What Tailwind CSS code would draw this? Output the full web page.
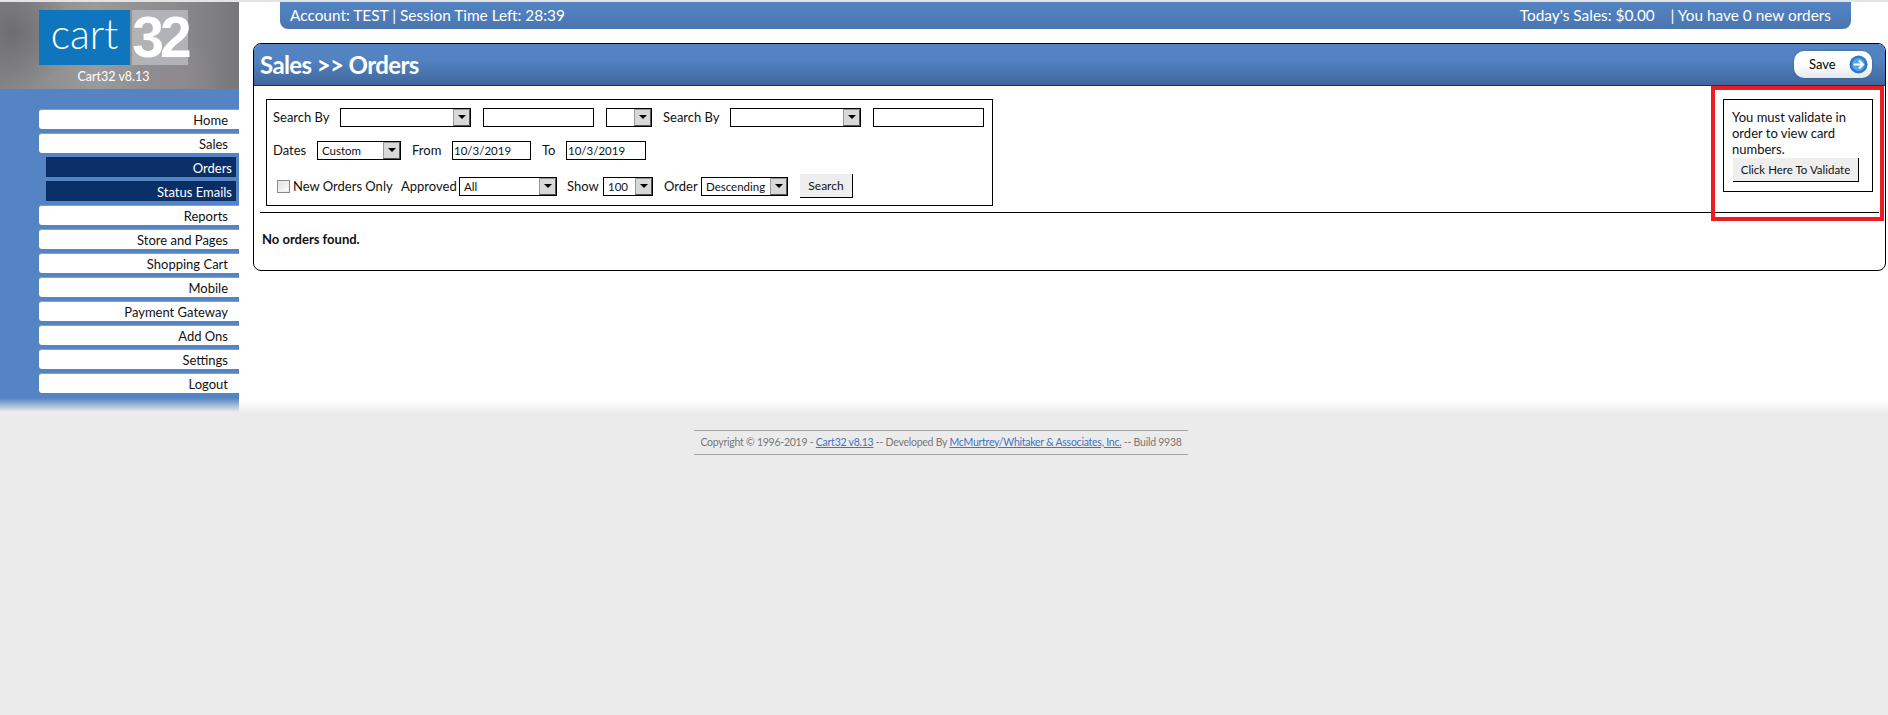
<!DOCTYPE html>
<html><head><meta charset="utf-8"><script src="https://cdn.jsdelivr.net/npm/@tailwindcss/browser@4"></script></head>
<body class="bg-[#ebebeb] font-['Lato','Liberation_Sans',sans-serif] text-[13px] text-[#111]">
<div class="relative h-[715px] w-[1888px] overflow-hidden">
  <div class="h-[400px] bg-white border-t-2 border-[#e4e4e4]">
    <div class="flex h-[398px] items-stretch">
      <aside class="w-[239px] shrink-0 bg-[#5484c4]">
        <div class="relative h-[87px] bg-[radial-gradient(circle_at_12px_30px,#6e6e70_0,transparent_60px),radial-gradient(circle_at_170px_80px,#8f8a90_0,transparent_50px),linear-gradient(90deg,#858587,#9a9a9c_40%,#8a8a8c_75%,#77777a)] pt-2">
          <div class="ml-[39px] flex h-[55px] w-[150px]">
            <div class="flex h-full w-[91px] items-center justify-center bg-[#0f76bd] pb-2 font-['Lato'] text-[41px] font-light leading-none text-white">cart</div>
            <div class="ml-[2px] flex h-full w-[56px] items-center justify-center bg-[#b2b3b6] font-['Liberation_Sans'] text-[57px] font-bold leading-none tracking-[-4px] text-white">32</div>
          </div>
          <div class="mt-[4px] ml-[22px] w-[183px] text-center text-[12.5px] leading-[16px] text-white">Cart32 v8.13</div>
        </div>
        <nav class="flex flex-col gap-[4px] pt-[20px] pl-[39px] text-[13px] leading-[20px]">
          <a class="block h-[20px] rounded-l-[3px] border-t border-[#9c9c9c] bg-white pr-[11px] text-right">Home</a>
          <a class="block h-[20px] rounded-l-[3px] border-t border-[#9c9c9c] bg-white pr-[11px] text-right">Sales</a>
          <a class="ml-[7px] mr-[3px] block h-[20px] bg-[#0a2f66] pr-[4px] pt-[1px] text-right text-white">Orders</a>
          <a class="ml-[7px] mr-[3px] block h-[20px] bg-[#0a2f66] pr-[4px] pt-[1px] text-right text-white">Status Emails</a>
          <a class="block h-[20px] rounded-l-[3px] border-t border-[#9c9c9c] bg-white pr-[11px] text-right">Reports</a>
          <a class="block h-[20px] rounded-l-[3px] border-t border-[#9c9c9c] bg-white pr-[11px] text-right">Store and Pages</a>
          <a class="block h-[20px] rounded-l-[3px] border-t border-[#9c9c9c] bg-white pr-[11px] text-right">Shopping Cart</a>
          <a class="block h-[20px] rounded-l-[3px] border-t border-[#9c9c9c] bg-white pr-[11px] text-right">Mobile</a>
          <a class="block h-[20px] rounded-l-[3px] border-t border-[#9c9c9c] bg-white pr-[11px] text-right">Payment Gateway</a>
          <a class="block h-[20px] rounded-l-[3px] border-t border-[#9c9c9c] bg-white pr-[11px] text-right">Add Ons</a>
          <a class="block h-[20px] rounded-l-[3px] border-t border-[#9c9c9c] bg-white pr-[11px] text-right">Settings</a>
          <a class="block h-[20px] rounded-l-[3px] border-t border-[#9c9c9c] bg-white pr-[11px] text-right">Logout</a>
        </nav>
      </aside>
      <main class="min-w-0 flex-1 pl-[14px] pr-[2px]">
        <div class="ml-[27px] mr-[35px] flex h-[27px] items-center justify-between rounded-b-[8px] bg-[linear-gradient(180deg,#5484c4,#4a76b0)] pl-[10px] pr-[20px] text-[15.4px] text-white">
          <span>Account: TEST | Session Time Left: 28:39</span>
          <span>Today's Sales: $0.00 &nbsp;&nbsp; | You have 0 new orders</span>
        </div>
        <section class="relative mt-[14px] h-[228px] rounded-[8px] border border-black">
          <header class="flex h-[42px] items-center justify-between rounded-t-[7px] border-b border-[#20304a] bg-[linear-gradient(180deg,#5484c4_0,#5282c0_40%,#40679c_100%)] pl-[6px] pr-[13px]">
            <h1 class="text-[24px] font-bold leading-none tracking-[-0.6px] text-white">Sales &gt;&gt; Orders</h1>
            <button class="flex h-[27px] w-[78px] items-center justify-between rounded-[10px] bg-[linear-gradient(180deg,#fff_50%,#e4e7ec)] pl-[15px] pr-[4px] text-[13px] text-black shadow-[0_0_2px_#33557f]">
              Save
              <svg width="19" height="19" viewBox="0 0 19 19"><circle cx="9.5" cy="9.5" r="9" fill="#2a78c8"/><circle cx="9.5" cy="9.5" r="6.5" fill="#5aa4e6"/><path d="M4.5 9.5h9M10 5.5l4 4-4 4" fill="none" stroke="#fff" stroke-width="2"/></svg>
            </button>
          </header>
          <div class="flex items-start justify-between pl-[12px] pr-[12px] pt-[13px]">
            <form class="h-[107px] w-[727px] border border-black text-[13px] leading-[19px]">
              <div class="mt-[7px] flex h-[20px] items-center pl-[6px]">
                <span class="w-[67px]">Search By</span>
                <span class="flex h-[19px] w-[131px] justify-end border border-black"><span class="flex h-[17px] w-[17px] items-center justify-center border border-[#999] border-r-[#555] border-b-[#555] bg-[#d8d8d8]"><span class="h-0 w-0 border-x-[4px] border-t-[4px] border-x-transparent border-t-black"></span></span></span>
                <span class="ml-[12px] h-[19px] w-[111px] border border-black"></span>
                <span class="ml-[12px] flex h-[19px] w-[46px] justify-end border border-black"><span class="flex h-[17px] w-[17px] items-center justify-center border border-[#999] border-r-[#555] border-b-[#555] bg-[#d8d8d8]"><span class="h-0 w-0 border-x-[4px] border-t-[4px] border-x-transparent border-t-black"></span></span></span>
                <span class="ml-[11px] w-[67px]">Search By</span>
                <span class="flex h-[19px] w-[131px] justify-end border border-black"><span class="flex h-[17px] w-[17px] items-center justify-center border border-[#999] border-r-[#555] border-b-[#555] bg-[#d8d8d8]"><span class="h-0 w-0 border-x-[4px] border-t-[4px] border-x-transparent border-t-black"></span></span></span>
                <span class="ml-[12px] h-[19px] w-[111px] border border-black"></span>
              </div>
              <div class="mt-[13px] flex h-[20px] items-center pl-[6px]">
                <span class="w-[44px]">Dates</span>
                <span class="flex h-[19px] w-[84px] items-center justify-between border border-black pl-[4px] text-[11.5px]">Custom<span class="flex h-[17px] w-[17px] items-center justify-center border border-[#999] border-r-[#555] border-b-[#555] bg-[#d8d8d8]"><span class="h-0 w-0 border-x-[4px] border-t-[4px] border-x-transparent border-t-black"></span></span></span>
                <span class="ml-[11px] w-[40px]">From</span>
                <span class="flex h-[19px] w-[79px] items-center border border-black pl-[1px] text-[11.5px]">10/3/2019</span>
                <span class="ml-[11px] w-[24px]">To</span>
                <span class="flex h-[19px] w-[80px] items-center border border-black pl-[1px] text-[11.5px]">10/3/2019</span>
              </div>
              <div class="mt-[16px] flex h-[20px] items-center pl-[10px]">
                <span class="h-[13px] w-[13px] border border-[#8a8a8a] bg-[linear-gradient(135deg,#ddd,#fff)] shadow-[inset_0_0_0_1px_#eee]"></span>
                <span class="ml-[3px] mt-[1px] w-[108px]">New Orders Only</span>
                <span class="w-[58px]">Approved</span>
                <span class="flex h-[19px] w-[98px] items-center justify-between border border-black pl-[4px] text-[11.5px]">All<span class="flex h-[17px] w-[17px] items-center justify-center border border-[#999] border-r-[#555] border-b-[#555] bg-[#d8d8d8]"><span class="h-0 w-0 border-x-[4px] border-t-[4px] border-x-transparent border-t-black"></span></span></span>
                <span class="ml-[10px] w-[36px]">Show</span>
                <span class="flex h-[19px] w-[50px] items-center justify-between border border-black pl-[4px] text-[11.5px]">100<span class="flex h-[17px] w-[17px] items-center justify-center border border-[#999] border-r-[#555] border-b-[#555] bg-[#d8d8d8]"><span class="h-0 w-0 border-x-[4px] border-t-[4px] border-x-transparent border-t-black"></span></span></span>
                <span class="ml-[11px] w-[37px]">Order</span>
                <span class="flex h-[19px] w-[87px] items-center justify-between border border-black pl-[4px] text-[11.5px]">Descending<span class="flex h-[17px] w-[17px] items-center justify-center border border-[#999] border-r-[#555] border-b-[#555] bg-[#d8d8d8]"><span class="h-0 w-0 border-x-[4px] border-t-[4px] border-x-transparent border-t-black"></span></span></span>
                <button class="ml-[12px] h-[24px] w-[53px] border-r border-b border-black bg-[#eeeeee] text-[12px]">Search</button>
              </div>
            </form>
            <div class="h-[93px] w-[150px] border border-black pl-[8px] pt-[9px] text-[13px] leading-[16px]">
              <p>You must validate in order to view card numbers.</p>
              <button class="ml-[1px] mt-[1px] h-[24px] w-[126px] border-r border-b border-black bg-[#eeeeee] text-[11.5px]">Click Here To Validate</button>
            </div>
          </div>
          <div class="ml-[6px] mr-[6px] mt-[6px] border-t border-black"></div>
          <p class="ml-[8px] mt-[17px] text-[13px] font-bold leading-[18px]">No orders found.</p>
          <div class="pointer-events-none absolute left-[1457px] top-[42px] h-[135px] w-[173px] border-[4px] border-[#ed1c24]"></div>
        </section>
      </main>
    </div>
  </div>
  <div class="h-[14px] bg-[linear-gradient(180deg,#ffffff,#ebebeb)]"></div>
  <div class="absolute left-0 top-[398px] h-[14px] w-[239px] bg-[linear-gradient(180deg,#5484c4,#ebebeb)]"></div>
  <footer class="ml-[694px] mt-[16px] flex h-[25px] w-[494px] items-center justify-center whitespace-nowrap border-y border-[#a5a5a5] text-[10.5px] tracking-[-0.25px] text-[#777]">
    <span>Copyright © 1996-2019 - <a class="text-[#3f74c4] underline">Cart32 v8.13</a> -- Developed By <a class="text-[#3f74c4] underline">McMurtrey/Whitaker &amp; Associates, Inc.</a> -- Build 9938</span>
  </footer>
</div>
</body></html>
